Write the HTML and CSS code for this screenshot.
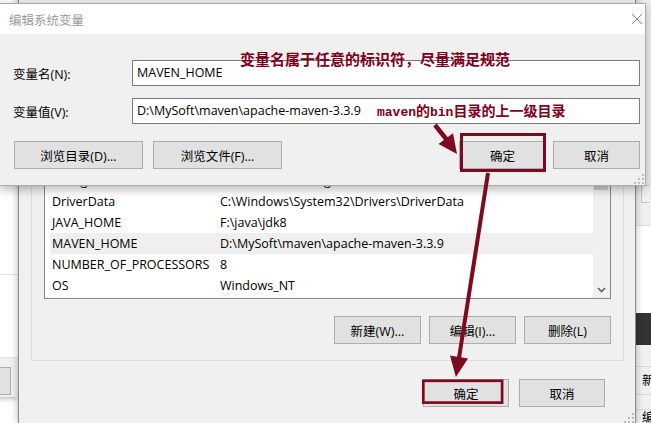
FILE: index.html
```html
<!DOCTYPE html>
<html lang="zh-CN">
<head>
<meta charset="utf-8">
<title>编辑系统变量</title>
<link rel="stylesheet" href="styles.css">
</head>
<body>
<div class="desktop">
  <div class="win win-left">
    <div class="wl-top"></div>
    <div class="wl-mid"></div>
    <div class="wl-foot"><div class="btn wl-btn"></div></div>
  </div>

  <div class="win win-right">
    <div class="wr-a"><div class="wr-box"></div></div>
    <div class="wr-b"></div>
    <div class="wr-c"></div>
    <div class="wr-d"></div>
    <div class="wr-e">新</div>
    <div class="wr-f"></div>
    <div class="wr-g">编</div>
  </div>

  <div class="win env">
    <div class="group">
      <div class="list">
        <div class="rows">
          <div class="row"><span class="c1">configsetroot</span><span class="c2">C:\Windows\ConfigSetRoot</span></div>
          <div class="row"><span class="c1">DriverData</span><span class="c2">C:\Windows\System32\Drivers\DriverData</span></div>
          <div class="row"><span class="c1">JAVA_HOME</span><span class="c2">F:\java\jdk8</span></div>
          <div class="row sel"><span class="c1">MAVEN_HOME</span><span class="c2">D:\MySoft\maven\apache-maven-3.3.9</span></div>
          <div class="row"><span class="c1">NUMBER_OF_PROCESSORS</span><span class="c2">8</span></div>
          <div class="row"><span class="c1">OS</span><span class="c2">Windows_NT</span></div>
        </div>
        <div class="vscroll">
          <div class="thumb"></div>
          <div class="track"></div>
          <div class="sarrow"><svg width="9" height="6" viewBox="0 0 9 6"><path d="M1 1L4.5 4.5L8 1" fill="none" stroke="#606060" stroke-width="1.6"/></svg></div>
        </div>
      </div>
      <div class="btnrow">
        <button class="btn">新建(W)...</button>
        <button class="btn">编辑(I)...</button>
        <button class="btn">删除(L)</button>
      </div>
    </div>
    <div class="foot">
      <button class="btn">确定</button>
      <button class="btn">取消</button>
    </div>
    <svg class="grip" width="10" height="10" viewBox="0 0 10 10"><g fill="#bdbdbd"><rect x="8" y="0" width="2" height="2"/><rect x="4" y="4" width="2" height="2"/><rect x="8" y="4" width="2" height="2"/><rect x="0" y="8" width="2" height="2"/><rect x="4" y="8" width="2" height="2"/><rect x="8" y="8" width="2" height="2"/></g></svg>
  </div>

  <div class="win dialog">
    <div class="titlebar">
      <span class="title">编辑系统变量</span>
      <svg width="10" height="10" viewBox="0 0 10 10"><path d="M0 0L10 10M10 0L0 10" stroke="#8c8c8c" stroke-width="1"/></svg>
    </div>
    <div class="dbody">
      <div class="field"><label>变量名(N):</label><div class="input">MAVEN_HOME</div></div>
      <div class="field"><label>变量值(V):</label><div class="input">D:\MySoft\maven\apache-maven-3.3.9</div></div>
      <div class="dbtns">
        <button class="btn wide">浏览目录(D)...</button>
        <button class="btn wide">浏览文件(F)...</button>
        <div class="spacer"></div>
        <button class="btn narrow">确定</button>
        <button class="btn narrow">取消</button>
      </div>
    </div>
    <svg class="grip" width="10" height="10" viewBox="0 0 10 10"><g fill="#bdbdbd"><rect x="8" y="0" width="2" height="2"/><rect x="4" y="4" width="2" height="2"/><rect x="8" y="4" width="2" height="2"/><rect x="0" y="8" width="2" height="2"/><rect x="4" y="8" width="2" height="2"/><rect x="8" y="8" width="2" height="2"/></g></svg>
  </div>

  <div class="note note1">变量名属于任意的标识符，尽量满足规范</div>
  <div class="note note2"><span class="mono">maven</span>的<span class="mono">bin</span>目录的上一级目录</div>

  <svg class="overlay" width="651" height="423" viewBox="0 0 651 423">
    <g fill="none" stroke="#7d0a20">
      <rect x="461.5" y="134.5" width="83" height="36" stroke-width="3"/>
      <rect x="423.3" y="380.8" width="78.8" height="21.8" stroke-width="2.7"/>
      <line x1="435" y1="125" x2="447" y2="140" stroke-width="4.5"/>
      <line x1="488" y1="173" x2="459" y2="358" stroke-width="4"/>
    </g>
    <polygon points="438.5,144 453,133.3 457,154" fill="#7d0a20"/>
    <polygon points="450,355.6 468,358.4 455.9,377" fill="#7d0a20"/>
  </svg>
</div>
</body>
</html>
```

FILE: styles.css
```css
* { box-sizing: border-box; margin: 0; padding: 0; }
html, body { width: 651px; height: 423px; overflow: hidden; }
body {
  background: #fff;
  font-family: "Open Sans", "Noto Sans CJK SC", sans-serif;
  font-size: 12.5px;
  color: #000;
}
.desktop { position: relative; width: 651px; height: 423px; overflow: hidden; }
.win { position: absolute; }

.btn {
  display: flex;
  align-items: center;
  justify-content: center;
  background: #e1e1e1;
  border: 1px solid #adadad;
  font: inherit;
  color: #000;
  white-space: nowrap;
}

/* left background window */
.win-left {
  left: -300px; top: -20px; width: 318px; height: 417px;
  background: #fff;
  display: flex; flex-direction: column;
  box-shadow: 0 2px 5px rgba(0,0,0,.25);
}
.wl-top { height: 295px; border-bottom: 1px solid #e3e3e3; flex: none; }
.wl-mid { flex: 1; }
.wl-foot {
  height: 40px; flex: none;
  background: #f0f0f0; border-top: 1px solid #e3e3e3;
  padding: 9px 7px 0 0;
  display: flex; justify-content: flex-end; align-items: flex-start;
}
.wl-btn { width: 80px; height: 28px; }

/* right background window */
.win-right {
  left: 636px; top: -10px; width: 100px; height: 440px;
  background: #f0f0f0;
  display: flex; flex-direction: column;
}
.wr-a { height: 235px; flex: none; padding: 195px 0 0 5px; }
.wr-box { width: 8px; height: 18px; border: 1px solid #c3c3c3; border-right: none; }
.wr-b { height: 88px; flex: none; background: #fff; border-top: 1px solid #e0e0e0; }
.wr-c { height: 32px; flex: none; background: #333; }
.wr-d { height: 22px; flex: none; border-bottom: 1px solid #d9d9d9; }
.wr-e { height: 28px; flex: none; border-bottom: 1px solid #d9d9d9; padding-left: 6px; line-height: 27px; }
.wr-f { height: 15px; flex: none; border-bottom: 1px solid #d9d9d9; }
.wr-g { height: 28px; flex: none; padding-left: 6px; line-height: 16px; }

/* environment variables window */
.env {
  left: 18px; top: -60px; width: 618px; height: 484px;
  background: #f0f0f0;
  border-left: 1px solid #8a8a8a;
  border-right: 1px solid #8a8a8a;
  box-shadow: 0 0 7px rgba(0,0,0,.3);
  display: flex; flex-direction: column;
  padding: 80px 11px 17px 12px;
  z-index: 1;
}
.group {
  flex: 1; min-height: 0;
  display: flex; flex-direction: column;
  border: 1px solid #dcdcdc;
  padding: 12px 12px 16px 12px;
}
.list {
  flex: 1; min-height: 0;
  display: flex;
  background: #fff;
  border: 1px solid #828790;
  overflow: hidden;
}
.rows {
  flex: 1;
  display: flex; flex-direction: column; justify-content: flex-end;
  padding-bottom: 2px;
  overflow: hidden;
}
.row {
  height: 21px; flex: none;
  margin-left: 5px; padding-left: 2px;
  display: flex;
  line-height: 21px;
  white-space: nowrap;
}
.row.sel { background: #efefef; }
.c1 { width: 168px; flex: none; }
.vscroll { width: 17px; flex: none; background: #f0f0f0; display: flex; flex-direction: column; }
.thumb { flex: 1; margin: 0 2px 0 1px; background: #cdcdcd; }
.track { height: 91px; flex: none; }
.sarrow { height: 17px; flex: none; display: flex; align-items: center; justify-content: center; }
.btnrow { display: flex; justify-content: flex-end; gap: 8px; margin-top: 17px; flex: none; }
.btnrow .btn { width: 87px; height: 28px; }
.foot { display: flex; justify-content: flex-end; gap: 10px; margin-top: 18px; padding-right: 19px; flex: none; }
.foot .btn { width: 86px; height: 28px; }
.grip { position: absolute; right: 1px; bottom: 1px; }

/* front dialog */
.dialog {
  left: -1px; top: 3px; width: 647px; height: 183px;
  border: 1px solid #aaa;
  background: #f0f0f0;
  box-shadow: 0 3px 10px rgba(0,0,0,.3);
  z-index: 2;
  display: flex; flex-direction: column;
}
.titlebar {
  height: 30px; flex: none;
  background: #fff;
  display: flex; align-items: center; justify-content: space-between;
  padding: 0 3px 0 9px;
  color: #999;
}
.dbody { flex: 1; padding: 26px 5px 0 13px; display: flex; flex-direction: column; }
.field { display: flex; align-items: center; height: 26px; flex: none; }
.field + .field { margin-top: 12px; }
.field label { width: 119px; flex: none; }
.input {
  flex: 1; height: 26px;
  border: 1px solid #7a7a7a;
  background: #fff;
  padding-left: 4px;
  line-height: 24px;
  white-space: nowrap;
}
.dbtns { display: flex; margin-top: 17px; padding-left: 1px; flex: none; }
.dbtns .wide { width: 129px; height: 28px; }
.dbtns .wide + .wide { margin-left: 10px; }
.dbtns .spacer { flex: 1; }
.dbtns .narrow { width: 87px; height: 28px; }
.dbtns .narrow + .narrow { margin-left: 7px; }

/* annotations */
.note {
  position: absolute; z-index: 3;
  color: #80001c;
  font-family: "Noto Sans CJK SC", sans-serif;
  font-weight: 700;
  white-space: nowrap;
}
.note1 { left: 240px; top: 50px; font-size: 15px; line-height: 18px; }
.note2 { left: 377px; top: 102px; font-size: 14px; line-height: 16px; }
.mono { font-family: "Liberation Mono", monospace; font-size: 13px; font-weight: 700; }
.overlay { position: absolute; left: 0; top: 0; z-index: 4; pointer-events: none; }
```
